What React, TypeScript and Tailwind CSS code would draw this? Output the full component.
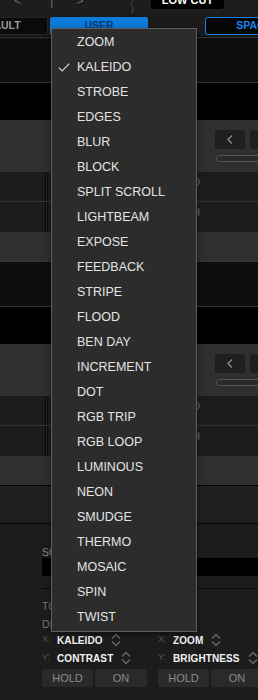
import React from 'react';

const effects = [
  'ZOOM', 'KALEIDO', 'STROBE', 'EDGES', 'BLUR', 'BLOCK', 'SPLIT SCROLL', 'LIGHTBEAM',
  'EXPOSE', 'FEEDBACK', 'STRIPE', 'FLOOD', 'BEN DAY', 'INCREMENT', 'DOT', 'RGB TRIP',
  'RGB LOOP', 'LUMINOUS', 'NEON', 'SMUDGE', 'THERMO', 'MOSAIC', 'SPIN', 'TWIST',
];

const UpDown: React.FC = () => (
  <svg width="10" height="14" viewBox="0 0 10 14" fill="none" stroke="#6a6a6a" strokeWidth="1.3">
    <path d="M1 5.5 L5 1.5 L9 5.5" />
    <path d="M1 8.5 L5 12.5 L9 8.5" />
  </svg>
);

const ParamRow: React.FC<{ axis: string; value: string }> = ({ axis, value }) => (
  <div className="flex items-center">
    <span className="w-[15px] text-[9px] text-[#555]">{axis}</span>
    <span className="text-[10px] font-bold text-[#f2f2f2] tracking-[0.1px]">{value}</span>
    <span className="ml-[8px] flex"><UpDown /></span>
  </div>
);

const Deck: React.FC = () => (
  <div className="flex flex-col">
    <div className="h-[46px] bg-[#0e0e10] border-y border-[#363636]" />
    <div className="h-[37px] bg-black" />
    <div className="h-[52px] bg-[#2f2f2f] pl-[215px] pt-[10px] flex flex-col">
      <div className="flex gap-[5px]">
        <div className="w-[30px] h-[19px] shrink-0 rounded-[2px] bg-[#1f1f1f] flex items-center justify-center">
          <svg width="6" height="9" viewBox="0 0 6 9" fill="none" stroke="#8a8a8a" strokeWidth="1.4">
            <path d="M5 0.5 L1 4.5 L5 8.5" />
          </svg>
        </div>
        <div className="w-[30px] h-[19px] shrink-0 rounded-[2px] bg-[#1f1f1f]" />
      </div>
      <div className="mt-[6px] ml-[1px] h-[7px] w-[60px] shrink-0 rounded-[3px] border border-[#555] bg-[#2a2a2a]" />
    </div>
    <div className="flex flex-col bg-[#1c1c1c]">
      {['SPEED', 'DEPTH'].map((label, i) => (
        <div key={label} className={`flex h-[30px] ${i === 0 ? 'border-b border-[#333]' : ''}`}>
          <div className="w-[45px]" />
          <div className="w-[3px] bg-[#0b0b0b] flex justify-center"><div className="w-px bg-[#262626]" /></div>
          <div className="w-[152px] pt-[3px] text-right text-[10px] text-[#6e6e6e]">{label}</div>
        </div>
      ))}
    </div>
    <div className="h-[29px] bg-[#2f2f2f]" />
  </div>
);

export default function App() {
  return (
    <div className="relative w-[258px] h-[700px] overflow-hidden bg-[#1c1c1c] font-['Liberation_Sans',Arial,sans-serif]">
      {/* top strip */}
      <div className="h-[13px] bg-[#1d1d1d] overflow-hidden">
        <div className="-mt-[8px] h-[17px] flex items-center text-[13px] text-[#666] leading-none">
          <span className="ml-[14px] w-[7px] text-center">&lt;</span>
          <span className="ml-[29px] w-[3px] text-center">|</span>
          <span className="ml-[23px] w-[7px] text-center">&gt;</span>
          <span className="ml-[43px] w-[12px] text-center text-[#444]">( )</span>
          <span className="ml-[13px] w-[73px] h-[17px] shrink-0 rounded-[3px] bg-black text-white text-[11px] font-bold flex items-center justify-center">LOW CUT</span>
        </div>
      </div>

      {/* tabs */}
      <div className="h-[24px] bg-[#1b1b1b] border-b border-[#0a0a0a] pt-[4px] flex text-[10.5px] font-bold">
        <div className="w-[48px] h-[18px] shrink-0 overflow-hidden rounded-r-[2px] bg-[#0b0b0b] border-y border-r border-[#262626] flex items-center">
          <span className="-ml-[27px] text-[#9a9a9a] whitespace-nowrap">DEFAULT</span>
        </div>
        <div className="ml-[2px] w-[98px] h-[18px] shrink-0 rounded-[2px] bg-[#0b7bdc] flex items-center justify-center text-[#083a72]">USER</div>
        <div className="ml-[57px] w-[98px] h-[18px] shrink-0 rounded-[3px] border border-[#1a80e0] bg-[#050505] flex items-center justify-center text-[#1d86e8]">SPACE</div>
      </div>

      <Deck />
      <Deck />

      {/* bottom */}
      <div className="border-t border-black">
        <div className="h-[38px] bg-[#1f1f1f] border-b border-black" />
        <div className="pl-[42px] pt-[22px] flex flex-col">
          <div className="h-[12px] leading-[12px] text-[10.5px] text-[#888]">SOURCE</div>
          <div className="h-[18px] bg-black" />
          <div className="mt-[12px] h-px bg-[#0a0a0a]" />
          <div className="mt-[11px] h-[12px] leading-[12px] text-[10.5px] text-[#777]">TOUCH FX</div>
          <div className="mt-[7px] h-[11px] leading-[11px] text-[10.5px] text-[#777]">DIRECT</div>
          <div className="mt-[1px] grid grid-cols-[116px_1fr]">
            <div className="flex flex-col">
              <div className="h-[18px] flex items-center"><ParamRow axis="X:" value="KALEIDO" /></div>
              <div className="h-[18px] flex items-center"><ParamRow axis="Y:" value="CONTRAST" /></div>
            </div>
            <div className="flex flex-col">
              <div className="h-[18px] flex items-center"><ParamRow axis="X:" value="ZOOM" /></div>
              <div className="h-[18px] flex items-center"><ParamRow axis="Y:" value="BRIGHTNESS" /></div>
            </div>
          </div>
          <div className="mt-[2px] flex text-[11px] text-[#8a8a8a]">
            <div className="w-[51px] h-[18px] shrink-0 rounded-[3px] bg-[#2a2a2a] flex items-center justify-center">HOLD</div>
            <div className="ml-[2px] w-[52px] h-[18px] shrink-0 rounded-[3px] bg-[#2a2a2a] flex items-center justify-center">ON</div>
            <div className="ml-[11px] w-[51px] h-[18px] shrink-0 rounded-[3px] bg-[#2a2a2a] flex items-center justify-center">HOLD</div>
            <div className="ml-[2px] w-[52px] h-[18px] shrink-0 rounded-[3px] bg-[#2a2a2a] flex items-center justify-center">ON</div>
          </div>
        </div>
      </div>

      {/* effect dropdown */}
      <div className="absolute left-[51px] top-[28px] w-[146px] border border-[#5e5e5e] bg-[#2c2c2c] py-[1px] shadow-[0_2px_6px_rgba(0,0,0,0.5)]">
        {effects.map((name) => (
          <div key={name} className="relative h-[25px] pl-[25px] flex items-center text-[12.5px] text-[#e4e4e4] whitespace-nowrap">
            {name === 'KALEIDO' && (
              <svg className="absolute left-[6px] top-[8px]" width="12" height="9" viewBox="0 0 12 9" fill="none" stroke="#dcdcdc" strokeWidth="1.1">
                <path d="M0.8 4.6 L4.2 8 L11.2 0.6" />
              </svg>
            )}
            {name}
          </div>
        ))}
      </div>
    </div>
  );
}
